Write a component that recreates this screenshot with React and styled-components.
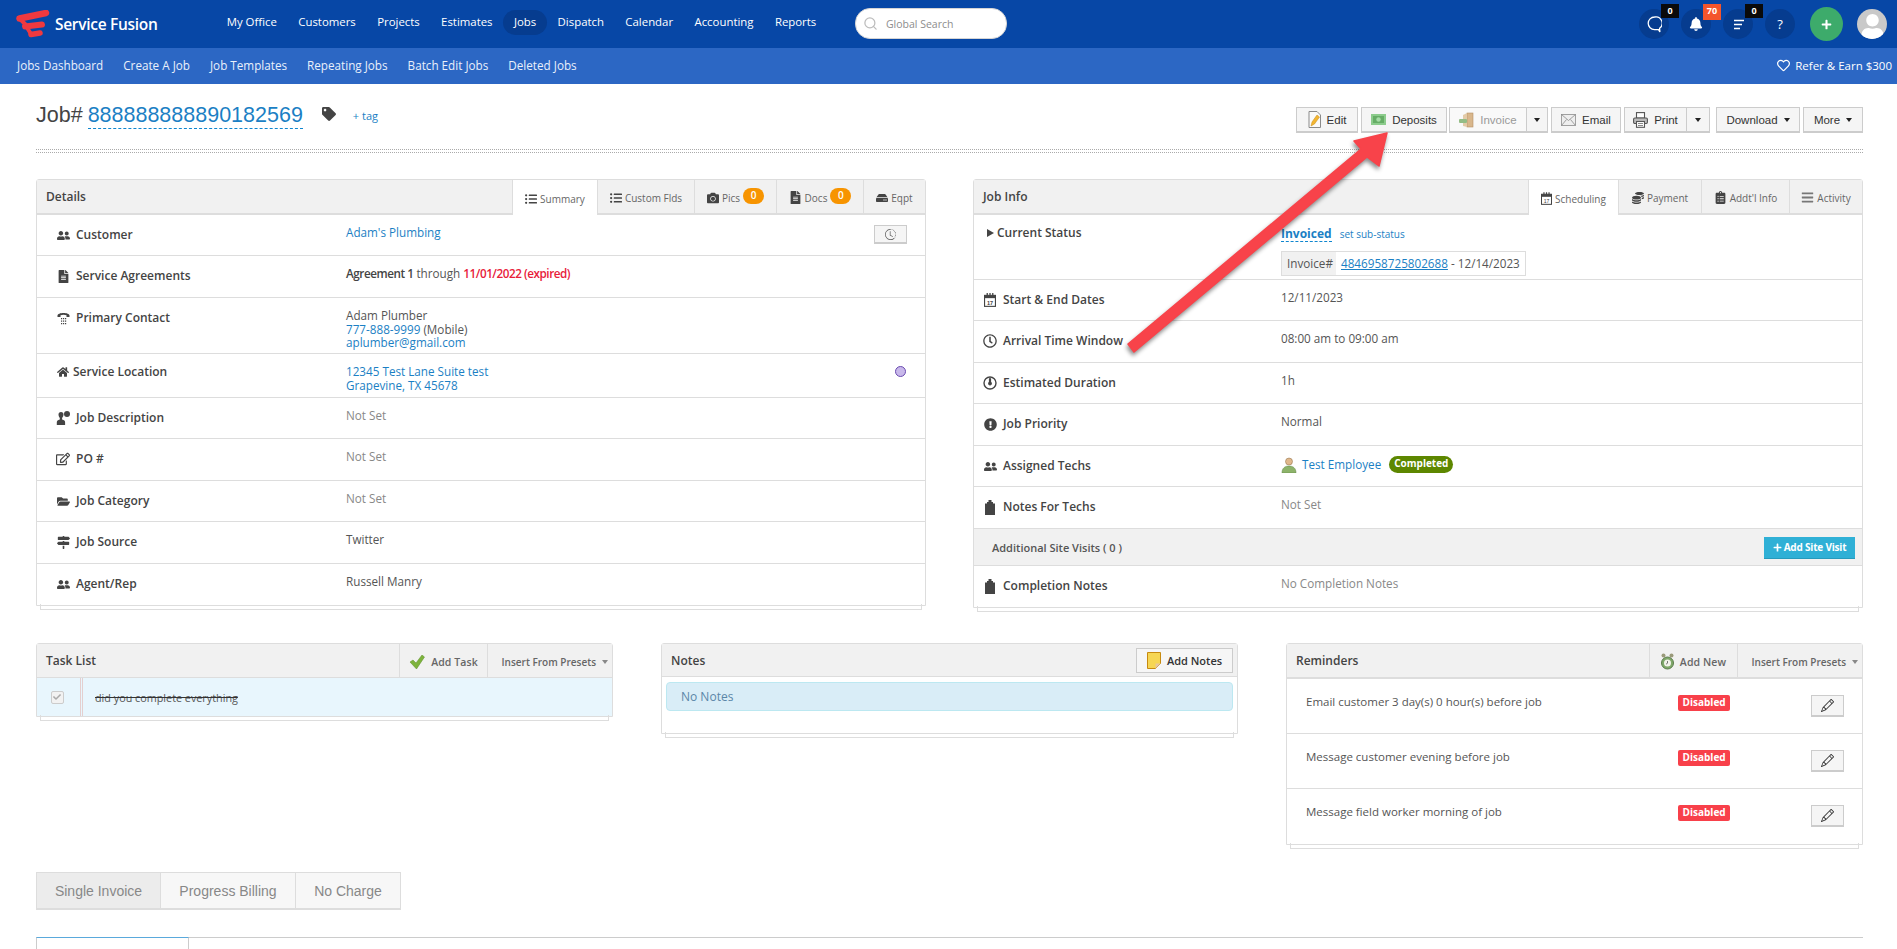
import React from "react";
import styled, { createGlobalStyle } from "styled-components";
import {
  FaListUl, FaCamera, FaFileAlt, FaHome, FaFolderOpen, FaRegClock, FaExclamationCircle,
  FaClipboardList, FaTag, FaUserFriends, FaPlus, FaCoins, FaBell, FaRegHeart, FaUser,
  FaRegEdit, FaCheck, FaHdd, FaBars, FaMapSigns,
} from "react-icons/fa";
import { FiSearch } from "react-icons/fi";
import { BsPencil, BsClockHistory } from "react-icons/bs";

const GlobalStyle = createGlobalStyle`
  html, body { margin: 0; padding: 0; height: 949px; overflow: hidden; background: #fff; }
  body { font-family: "Open Sans", "Liberation Sans", sans-serif; font-size: 12px; color: #555; }
  * { box-sizing: border-box; }
`;

const Page = styled.div`
  position: relative;
  width: 1897px;
  height: 949px;
  overflow: hidden;
`;

const TopBar = styled.div`
  height: 48px;
  background: #0747a6;
  display: flex;
  align-items: center;
  color: #fff;
`;

const Brand = styled.div`
  width: 216px;
  padding-left: 16px;
  display: flex;
  align-items: center;
  gap: 5px;
  font-size: 15.5px;
  font-weight: 600;
  letter-spacing: -0.3px;
`;

const MainNav = styled.div`
  display: flex;
  align-items: center;
  margin-top: -4px;
`;

const MainLink = styled.div`
  height: 25px;
  line-height: 24px;
  padding: 0 10.7px;
  font-size: 11.4px;
  border-radius: 13px;
  color: #fff;
  background: ${(props) => (props.$active ? "#063c8f" : "transparent")};
`;

const SearchBox = styled.div`
  width: 152px;
  height: 31px;
  margin-left: 28px;
  margin-top: -1px;
  background: #fff;
  border-radius: 15px;
  border: 1px solid #d5d5d5;
  display: flex;
  align-items: center;
  gap: 8px;
  padding-left: 7px;
  color: #8d8d8d;
  font-size: 10.5px;
  & svg { color: #bcbcbc; }
`;

const RightIcons = styled.div`
  margin-left: auto;
  margin-right: 10px;
  display: flex;
  align-items: center;
`;

const CircleBtn = styled.div`
  position: relative;
  width: 30px;
  height: 30px;
  margin-right: 12px;
  border-radius: 50%;
  background: #063c8f;
  color: #fff;
  display: flex;
  align-items: center;
  justify-content: center;
  font-size: 13px;
`;

const Count = styled.span`
  position: absolute;
  top: -5px;
  left: 22px;
  width: 18px;
  height: ${(props) => (props.$hot ? "16px" : "14px")};
  background: ${(props) => (props.$hot ? "#f4552c" : "#0a0a0a")};
  color: #fff;
  font-size: 9px;
  font-weight: 700;
  line-height: 14px;
  text-align: center;
`;

const AddCircle = styled.div`
  width: 33px;
  height: 34px;
  margin: 0 14px 0 3px;
  border-radius: 50%;
  background: #3dab6b;
  color: #fff;
  display: flex;
  align-items: center;
  justify-content: center;
`;

const Avatar = styled.div`
  width: 30px;
  height: 30px;
  border-radius: 50%;
  background: #c9c9c9;
  overflow: hidden;
  display: flex;
  align-items: flex-end;
  justify-content: center;
  color: #fff;
`;

const SubBar = styled.div`
  height: 36px;
  background: #2c67c4;
  color: #e9f0fb;
  display: flex;
  align-items: center;
  gap: 20px;
  padding: 0 5px 2px 17px;
  font-size: 11.7px;
`;

const ReferLink = styled.div`
  margin-left: auto;
  display: flex;
  align-items: center;
  gap: 5px;
  color: #fff;
  font-size: 11.5px;
`;

const Content = styled.div`
  padding: 0 34px 0 36px;
`;

const TitleRow = styled.div`
  height: 66px;
  display: flex;
  border-bottom: 1px dotted #aaa;
  position: relative;
  &::after {
    content: "";
    position: absolute;
    left: 0;
    right: 0;
    bottom: -4px;
    border-bottom: 1px dotted #aaa;
  }
`;

const JobTitle = styled.div`
  display: flex;
  align-items: flex-start;
  padding-top: 19px;
  font-family: "Liberation Sans", sans-serif;
  font-size: 21.5px;
  color: #444;
`;

const JobNumber = styled.span`
  color: #1b7fc4;
  margin-left: 5px;
  height: 26px;
  line-height: 25px;
  border-bottom: 1px dashed #0f86cf;
`;

const TagIcon = styled.span`
  margin: 4px 17px 0 19px;
  color: #444;
  font-size: 14px;
  display: flex;
`;

const TagLink = styled.span`
  font-family: "Open Sans", sans-serif;
  font-size: 11px;
  color: #1b7fc4;
  margin-top: 5px;
`;

const Actions = styled.div`
  margin-left: auto;
  margin-top: 23px;
  display: flex;
  align-items: flex-start;
`;

const ActionButton = styled.div`
  width: ${(props) => props.$w}px;
  height: 26px;
  margin-left: ${(props) => props.$ml ?? 3}px;
  border: 1px solid #ccc;
  border-bottom-width: 2px;
  background: ${(props) => (props.$off ? "#f9f9f9" : "#f5f5f5")};
  color: ${(props) => (props.$off ? "#999" : "#333")};
  font-family: "Liberation Sans", sans-serif;
  font-size: 11.5px;
  display: flex;
  align-items: center;
  justify-content: center;
  gap: 6px;
`;

const Caret = styled.i`
  width: 0;
  height: 0;
  border-left: 3px solid transparent;
  border-right: 3px solid transparent;
  border-top: 4px solid ${(props) => props.$color || "#222"};
`;

const TopGrid = styled.div`
  display: grid;
  grid-template-columns: 890px 890px;
  justify-content: space-between;
  align-items: start;
  margin-top: 29px;
`;

const Panel = styled.div`
  position: relative;
  border: 1px solid #ddd;
  border-radius: 3px 3px 0 0;
  background: #fff;
  &::after {
    content: "";
    position: absolute;
    left: 3px;
    right: 3px;
    bottom: -5px;
    height: 5px;
    border: 1px solid #ddd;
    border-top: none;
  }
`;

const PanelHead = styled.div`
  height: ${(props) => props.$h || 35}px;
  background: #f1f1f1;
  border-bottom: ${(props) => props.$line || 2}px solid #ddd;
  display: flex;
  align-items: stretch;
`;

const PanelTitle = styled.div`
  flex: 1;
  padding: 8px 0 0 9px;
  font-weight: 600;
  font-size: 12px;
  color: #444;
`;

const Tab = styled.div`
  width: ${(props) => props.$w}px;
  margin-bottom: ${(props) => (props.$on ? "-2px" : "0")};
  background: ${(props) => (props.$on ? "#fff" : "transparent")};
  border-left: 1px solid #ddd;
  padding-top: 2px;
  display: flex;
  align-items: center;
  justify-content: center;
  gap: 3px;
  font-size: 10px;
  color: #666;
  & svg { color: #444; }
`;

const TabCount = styled.span`
  min-width: 21px;
  height: 16px;
  margin-top: -4px;
  border-radius: 8px;
  background: #f79400;
  color: #fff;
  font-size: 10px;
  font-weight: 600;
  text-align: center;
  line-height: 15px;
`;

const Row = styled.div`
  position: relative;
  height: ${(props) => props.$h}px;
  border-bottom: ${(props) => (props.$last ? "none" : "1px solid #ddd")};
  display: flex;
  align-items: flex-start;
  padding: 0 0 0 ${(props) => props.$pad || 19}px;
`;

const RowLabel = styled.div`
  width: ${(props) => props.$w}px;
  padding-top: ${(props) => props.$top ?? 11}px;
  display: flex;
  align-items: center;
  gap: ${(props) => props.$gap ?? 6}px;
  font-weight: 600;
  font-size: 12px;
  line-height: 18px;
  color: #444;
  & svg { color: #444; flex: none; }
`;

const IconBox = styled.span`
  width: 14px;
  display: flex;
  justify-content: center;
  flex: none;
`;

const PlayMark = styled.i`
  width: 0;
  height: 0;
  margin-left: 1px;
  border-top: 4.5px solid transparent;
  border-bottom: 4.5px solid transparent;
  border-left: 7px solid #444;
`;

const RowValue = styled.div`
  padding-top: 11px;
  font-size: 11.7px;
  line-height: 13.5px;
  color: ${(props) => (props.$muted ? "#888" : "#555")};
`;

const Link = styled.span`
  color: #1b7fc4;
  text-decoration: ${(props) => (props.$under ? "underline" : "none")};
`;

const Expired = styled.span`
  color: #e8203a;
  font-weight: 600;
  letter-spacing: -0.45px;
`;

const Strong = styled.span`
  font-weight: 600;
  color: #444;
  letter-spacing: -0.45px;
`;

const HistoryButton = styled.div`
  position: absolute;
  top: 10px;
  right: 18px;
  width: 33px;
  height: 19px;
  background: #f5f5f5;
  border: 1px solid #ccc;
  border-bottom-width: 2px;
  display: flex;
  align-items: center;
  justify-content: center;
  color: #555;
`;

const PurpleDot = styled.span`
  position: absolute;
  top: 12px;
  right: 19px;
  width: 11px;
  height: 11px;
  border-radius: 50%;
  background: #c8b8ea;
  border: 1px solid #6a4bb0;
`;

const StatusLine = styled.div`
  display: flex;
  align-items: baseline;
  gap: 8px;
`;

const StatusLink = styled.span`
  color: #1b7fc4;
  font-weight: 700;
  font-size: 12px;
  line-height: 15px;
  border-bottom: 1px dashed #0f86cf;
`;

const SubStatus = styled.span`
  color: #1b7fc4;
  font-size: 10px;
`;

const InvoiceBox = styled.div`
  margin-top: 9px;
  width: 245px;
  height: 25px;
  border: 1px solid #ddd;
  display: flex;
  align-items: center;
  white-space: nowrap;
`;

const InvoiceTag = styled.span`
  width: 54px;
  height: 23px;
  line-height: 22px;
  padding-left: 5px;
  background: #f1f1f1;
  margin-right: 5px;
  flex: none;
`;

const TechLine = styled.div`
  display: flex;
  align-items: center;
  gap: 5px;
  margin-top: -1px;
`;

const GreenPill = styled.span`
  background: #5d8700;
  color: #fff;
  font-size: 10px;
  font-weight: 700;
  height: 17px;
  line-height: 15px;
  border-radius: 9px;
  padding: 0 5px;
  margin-left: 3px;
`;

const VisitBar = styled.div`
  height: 37px;
  background: #f1f1f1;
  border-bottom: 1px solid #ddd;
  display: flex;
  align-items: center;
  justify-content: space-between;
  padding: 0 7px 0 18px;
  font-size: 11px;
  font-weight: 600;
  color: #555;
`;

const VisitButton = styled.div`
  width: 91px;
  height: 22px;
  margin-top: 1px;
  background: #2fb0d6;
  border-bottom: 1px solid #269abc;
  color: #fff;
  font-size: 10px;
  font-weight: 700;
  letter-spacing: -0.2px;
  display: flex;
  align-items: center;
  justify-content: center;
  gap: 2px;
`;

const BottomGrid = styled.div`
  display: grid;
  grid-template-columns: 577px 577px 577px;
  justify-content: space-between;
  align-items: start;
  margin-top: 35px;
`;

const HeadAction = styled.div`
  width: ${(props) => props.$w}px;
  border-left: 1px solid #ddd;
  display: flex;
  align-items: center;
  justify-content: center;
  gap: 6px;
  padding-top: 2px;
  font-size: 10.5px;
  font-weight: 600;
  letter-spacing: 0.1px;
  color: #666;
`;

const PresetAction = styled(HeadAction)`
  font-size: 10px;
  justify-content: flex-end;
  padding-right: 4px;
  letter-spacing: 0;
`;

const TaskRow = styled.div`
  height: 38px;
  background: #e8f6fd;
  display: flex;
  align-items: center;
`;

const CheckCell = styled.div`
  width: 46px;
  height: 38px;
  border-right: 3px double #e4cfcf;
  display: flex;
  align-items: center;
  justify-content: center;
  padding-right: 3px;
`;

const CheckBox = styled.span`
  width: 13px;
  height: 13px;
  border: 1px solid #ccc;
  border-radius: 2px;
  background: #f2f2f2;
  color: #aaa;
  font-size: 8px;
  display: flex;
  align-items: center;
  justify-content: center;
`;

const TaskText = styled.span`
  margin-left: 12px;
  font-size: 10.8px;
  color: #555;
  text-decoration: line-through;
  text-decoration-color: #333;
`;

const AddNotes = styled.div`
  width: 97px;
  height: 25px;
  margin: 4px 4px 0 0;
  background: #f6f6f6;
  border: 1px solid #ccc;
  display: flex;
  align-items: center;
  justify-content: center;
  gap: 6px;
  font-size: 11px;
  font-weight: 600;
  color: #333;
`;

const NotesBody = styled.div`
  height: 56px;
  padding: 5px 4px 0;
`;

const NotesAlert = styled.div`
  height: 29px;
  padding-left: 14px;
  background: #d9edf7;
  border: 1px solid #bce8f1;
  border-radius: 4px;
  color: #5b87a8;
  font-size: 12px;
  line-height: 27px;
`;

const ReminderRow = styled.div`
  height: 55px;
  padding: 16px 18px 0 19px;
  border-bottom: ${(props) => (props.$last ? "none" : "1px solid #ddd")};
  display: flex;
  align-items: flex-start;
  font-size: 11.5px;
  line-height: 18px;
  color: #555;
`;

const ReminderText = styled.div`
  width: 373px;
  margin-top: -2px;
`;

const DisabledTag = styled.span`
  width: 52px;
  height: 16px;
  background: #f8404a;
  border-radius: 2px;
  color: #fff;
  font-size: 10px;
  font-weight: 700;
  line-height: 15px;
  text-align: center;
`;

const EditSquare = styled.div`
  width: 33px;
  height: 22px;
  margin-left: 81px;
  background: #f5f5f5;
  border: 1px solid #ccc;
  border-bottom-width: 2px;
  color: #333;
  display: flex;
  align-items: center;
  justify-content: center;
`;

const BillingTabs = styled.div`
  display: flex;
  margin-top: 27px;
`;

const BillingTab = styled.div`
  height: 38px;
  width: ${(props) => props.$w}px;
  margin-left: -1px;
  background: ${(props) => (props.$on ? "#ececec" : "#f7f7f7")};
  border: 1px solid #ddd;
  border-bottom-width: 2px;
  font-family: "Liberation Sans", sans-serif;
  font-size: 14px;
  color: #888;
  display: flex;
  align-items: center;
  justify-content: center;
  &:first-child { margin-left: 0; }
`;

const LowerTabs = styled.div`
  margin-top: 27px;
  height: 20px;
  border-top: 1px solid #ccc;
  position: relative;
`;

const LowerActive = styled.div`
  position: absolute;
  top: -1px;
  left: 0;
  width: 153px;
  height: 20px;
  border-top: 1px solid #5aa9dc;
  border-left: 1px solid #ccc;
  border-right: 1px solid #ccc;
  background: #fff;
`;

const ArrowOverlay = styled.svg`
  position: absolute;
  left: 0;
  top: 0;
  width: 1897px;
  height: 949px;
  pointer-events: none;
  filter: drop-shadow(-1px 3px 2px rgba(0, 0, 0, 0.45));
`;

function Logo() {
  return (
    <svg width="34" height="28" viewBox="0 0 34 28" fill="none" stroke="#f0393f" strokeLinecap="round">
      <path d="M3.500 8.500L30 3" strokeWidth="6.500" />
      <path d="M4 9L11 16M10 16L15 24" strokeWidth="4" />
      <path d="M9 16.500L26 14.500" strokeWidth="6" />
      <path d="M15 24.500L24 23" strokeWidth="5.500" />
    </svg>
  );
}

function ChatIcon() {
  return (
    <svg width="15" height="17" viewBox="0 0 15 17" fill="none" stroke="#fff" strokeWidth="1.300">
      <path d="M7.500 1a6.300 6.300 0 1 0 0 12.600c1.500 0 3 .1 4 .1l1.400 2.300-.3-3.800A6.300 6.300 0 0 0 7.500 1z" />
    </svg>
  );
}

function LinesIcon() {
  return (
    <svg width="13" height="13" viewBox="0 0 13 13" stroke="#fff" strokeWidth="1.700">
      <path d="M2 2.500h10M2 6.500h8M2 10.500h6" />
    </svg>
  );
}

function EditIcon() {
  return (
    <svg width="13" height="17" viewBox="0 0 13 17">
      <path d="M1 .5h8l3.500 3.500v12.500H1z" fill="#fafafa" stroke="#8a8a8a" />
      <path d="M3 15l1-4 5-7 2.500 2-5 7z" fill="#f2b632" stroke="#c88a12" strokeWidth=".5" />
    </svg>
  );
}

function MoneyIcon() {
  return (
    <svg width="15" height="11" viewBox="0 0 15 11">
      <rect width="15" height="11" fill="#8ccc8c" />
      <rect x="2" y="2" width="11" height="7" fill="#66ad66" />
      <circle cx="7.500" cy="5.500" r="2.200" fill="#a6dca6" />
    </svg>
  );
}

function DoorIcon() {
  return (
    <svg width="15" height="16" viewBox="0 0 15 16">
      <rect x="8" y="1" width="6" height="14" fill="#d9b78c" stroke="#b59266" strokeWidth=".6" />
      <path d="M8 1L4 3v11l4 1z" fill="#e3cba8" />
      <rect x="0" y="7" width="8" height="4" rx="1" fill="#94bd86" />
    </svg>
  );
}

function MailIcon() {
  return (
    <svg width="15" height="12" viewBox="0 0 15 12" fill="#eee" stroke="#8c8c8c" strokeWidth=".8">
      <rect x=".5" y=".5" width="14" height="11" />
      <path d="M.5.5l7 6 7-6M.5 11.500l5-6M14.500 11.500l-5-6" fill="none" />
    </svg>
  );
}

function PrintIcon() {
  return (
    <svg width="15" height="16" viewBox="0 0 15 16" fill="none" stroke="#555" strokeWidth="1.100">
      <rect x="3.500" y=".6" width="8" height="5.500" fill="#fff" />
      <rect x=".6" y="6" width="13.800" height="5.500" rx="1.200" fill="#bbb" />
      <rect x="3.500" y="9.500" width="8" height="5.800" fill="#fff" />
      <path d="M5 11.500h5M5 13.500h5" strokeWidth=".7" />
    </svg>
  );
}

function LeafCheck() {
  return (
    <svg width="16" height="14" viewBox="0 0 16 14">
      <path d="M1 7l3-2 3 3 6-8 2.500 2L7.500 14z" fill="#7db33c" stroke="#5b8f26" strokeWidth=".5" />
    </svg>
  );
}

function NoteIcon() {
  return (
    <svg width="14" height="17" viewBox="0 0 14 17">
      <path d="M.5.500h13v11l-5 5H.5z" fill="#f6d654" stroke="#c78a10" />
      <path d="M8.500 16.500v-5h5z" fill="#e6c6a0" />
    </svg>
  );
}

function AlarmIcon() {
  return (
    <svg width="13" height="17" viewBox="0 0 13 17">
      <circle cx="2.500" cy="2.500" r="2" fill="#9a9a7a" />
      <circle cx="10.500" cy="2.500" r="2" fill="#9a9a7a" />
      <circle cx="6.500" cy="10" r="6" fill="#7fa86a" stroke="#5b7b4b" />
      <circle cx="6.500" cy="10" r="3.500" fill="#f2f2ea" />
      <path d="M6.500 8v2.200l-1.500 1" stroke="#444" strokeWidth=".7" fill="none" />
    </svg>
  );
}

function TechIcon() {
  return (
    <svg width="16" height="16" viewBox="0 0 16 16">
      <circle cx="8" cy="4.500" r="3.500" fill="#e0b88c" stroke="#8b6a40" strokeWidth=".5" />
      <path d="M1 16c0-5 3-7 7-7s7 2 7 7z" fill="#8db36a" stroke="#5f8543" strokeWidth=".5" />
    </svg>
  );
}

function CalendarIcon({ size = 15 }) {
  return (
    <svg width={size} height={size + 2} viewBox="0 0 13 15">
      <rect x=".6" y="2.500" width="11.800" height="11.900" fill="#fff" stroke="#444" strokeWidth="1.200" />
      <rect x=".6" y="2.500" width="11.800" height="3" fill="#444" />
      <path d="M3.500 0v3.500M6.500 0v3.500M9.500 0v3.500" stroke="#444" strokeWidth="1.400" />
      <text x="6.500" y="12.500" fontSize="6" textAnchor="middle" fill="#444" fontFamily="Liberation Sans, sans-serif">17</text>
    </svg>
  );
}

function ContactIcon() {
  return (
    <svg width="13" height="15" viewBox="0 0 13 15" fill="#444">
      <path d="M.5 4.500C.5 1 12.500 1 12.500 4.500V6H9.500V4.200C8 3.500 5 3.500 3.500 4.200V6H.5z" />
      <path d="M4 7h1.200v1.200H4zM6 7h1.200v1.200H6zM8 7h1.200v1.200H8zM4 9.500h1.200v1.200H4zM6 9.500h1.200v1.200H6zM8 9.500h1.200v1.200H8zM4 12h1.200v1.200H4zM6 12h1.200v1.200H6zM8 12h1.200v1.200H8z" />
    </svg>
  );
}

function RepIcon() {
  return (
    <svg width="14" height="14" viewBox="0 0 14 14" fill="#444">
      <circle cx="11" cy="3" r="3" />
      <path d="M5 1a2.500 2.500 0 0 1 2.500 2.500c0 1.400-.8 2.500-1.400 3.400V8.500c2 .5 3 1 3 3V14H.8v-2.500c0-2 1-2.500 3-3V6.900C3.200 6 2.500 4.900 2.500 3.500A2.500 2.500 0 0 1 5 1z" />
    </svg>
  );
}

function DurationIcon() {
  return (
    <svg width="14" height="14" viewBox="0 0 14 14" fill="none" stroke="#444">
      <circle cx="7" cy="7" r="6" strokeWidth="1.400" />
      <path d="M7 3v4" strokeWidth="2.200" strokeLinecap="round" />
      <circle cx="7" cy="7.500" r="1.500" fill="#444" />
    </svg>
  );
}

function ClipIcon() {
  return (
    <svg width="10" height="15" viewBox="0 0 10 15" fill="#444">
      <path d="M3.500 0h3v2h1.500v1.500H10V15H0V3.500h2V2h1.500z" />
    </svg>
  );
}

function LabelRow({ h, icon, label, top, pad, w, gap, last, children }) {
  return (
    <Row $h={h} $last={last} $pad={pad}>
      <RowLabel $w={w} $top={top} $gap={gap}>
        <IconBox>{icon}</IconBox>
        {label}
      </RowLabel>
      {children}
    </Row>
  );
}

const leftRows = [
  { h: 41, icon: <FaUserFriends size={13} />, label: "Customer", value: <Link>Adam's Plumbing</Link>, extra: <HistoryButton><BsClockHistory size={11} /></HistoryButton> },
  { h: 42, icon: <FaFileAlt size={13} />, label: "Service Agreements", value: <><Strong>Agreement 1</Strong> through <Expired>11/01/2022 (expired)</Expired></> },
  { h: 56, icon: <ContactIcon />, label: "Primary Contact", value: <>Adam Plumber<br /><Link>777-888-9999</Link> (Mobile)<br /><Link>aplumber@gmail.com</Link></> },
  { h: 44, icon: <FaHome size={12} />, label: "Service Location", top: 9, gap: 3, value: <><Link>12345 Test Lane Suite test</Link><br /><Link>Grapevine, TX 45678</Link></>, extra: <PurpleDot /> },
  { h: 41, icon: <RepIcon />, label: "Job Description", value: "Not Set", muted: true },
  { h: 42, icon: <FaRegEdit size={14} />, label: "PO #", value: "Not Set", muted: true },
  { h: 41, icon: <FaFolderOpen size={13} />, label: "Job Category", value: "Not Set", muted: true },
  { h: 42, icon: <FaMapSigns size={13} />, label: "Job Source", value: "Twitter" },
  { h: 41, icon: <FaUserFriends size={13} />, label: "Agent/Rep", value: "Russell Manry", last: true },
];

const rightRows = [
  { h: 41, icon: <CalendarIcon size={12} />, label: "Start & End Dates", value: "12/11/2023" },
  { h: 42, icon: <FaRegClock size={14} />, label: "Arrival Time Window", value: "08:00 am to 09:00 am" },
  { h: 41, icon: <DurationIcon />, label: "Estimated Duration", value: "1h" },
  { h: 42, icon: <FaExclamationCircle size={13} />, label: "Job Priority", value: "Normal" },
  {
    h: 41,
    icon: <FaUserFriends size={13} />,
    label: "Assigned Techs",
    value: (
      <TechLine>
        <TechIcon />
        <Link>Test Employee</Link>
        <GreenPill>Completed</GreenPill>
      </TechLine>
    ),
  },
  { h: 42, icon: <ClipIcon />, label: "Notes For Techs", value: "Not Set", muted: true },
];

const reminders = [
  "Email customer 3 day(s) 0 hour(s) before job",
  "Message customer evening before job",
  "Message field worker morning of job",
];

export default function App() {
  return (
    <Page>
      <GlobalStyle />
      <TopBar>
        <Brand>
          <Logo />
          Service Fusion
        </Brand>
        <MainNav>
          <MainLink>My Office</MainLink>
          <MainLink>Customers</MainLink>
          <MainLink>Projects</MainLink>
          <MainLink>Estimates</MainLink>
          <MainLink $active>Jobs</MainLink>
          <MainLink>Dispatch</MainLink>
          <MainLink>Calendar</MainLink>
          <MainLink>Accounting</MainLink>
          <MainLink>Reports</MainLink>
        </MainNav>
        <SearchBox>
          <FiSearch size={15} />
          Global Search
        </SearchBox>
        <RightIcons>
          <CircleBtn><ChatIcon /><Count>0</Count></CircleBtn>
          <CircleBtn><FaBell size={14} /><Count $hot>70</Count></CircleBtn>
          <CircleBtn><LinesIcon /><Count>0</Count></CircleBtn>
          <CircleBtn>?</CircleBtn>
          <AddCircle><FaPlus size={11} /></AddCircle>
          <Avatar><FaUser size={25} /></Avatar>
        </RightIcons>
      </TopBar>
      <SubBar>
        <span>Jobs Dashboard</span>
        <span>Create A Job</span>
        <span>Job Templates</span>
        <span>Repeating Jobs</span>
        <span>Batch Edit Jobs</span>
        <span>Deleted Jobs</span>
        <ReferLink><FaRegHeart size={13} />Refer &amp; Earn $300</ReferLink>
      </SubBar>
      <Content>
        <TitleRow>
          <JobTitle>
            Job#
            <JobNumber>888888888890182569</JobNumber>
            <TagIcon><FaTag /></TagIcon>
            <TagLink>+ tag</TagLink>
          </JobTitle>
          <Actions>
            <ActionButton $w={62} $ml={0}><EditIcon />Edit</ActionButton>
            <ActionButton $w={86}><MoneyIcon />Deposits</ActionButton>
            <ActionButton $w={78} $ml={2} $off><DoorIcon />Invoice</ActionButton>
            <ActionButton $w={22} $ml={-1}><Caret /></ActionButton>
            <ActionButton $w={70}><MailIcon />Email</ActionButton>
            <ActionButton $w={63}><PrintIcon />Print</ActionButton>
            <ActionButton $w={24} $ml={-1}><Caret /></ActionButton>
            <ActionButton $w={84} $ml={6}>Download <Caret /></ActionButton>
            <ActionButton $w={60}>More <Caret /></ActionButton>
          </Actions>
        </TitleRow>
        <TopGrid>
          <Panel>
            <PanelHead>
              <PanelTitle>Details</PanelTitle>
              <Tab $w={85} $on><FaListUl size={12} />Summary</Tab>
              <Tab $w={97}><FaListUl size={12} />Custom Flds</Tab>
              <Tab $w={82}><FaCamera size={12} />Pics <TabCount>0</TabCount></Tab>
              <Tab $w={87}><FaFileAlt size={13} />Docs <TabCount>0</TabCount></Tab>
              <Tab $w={62}><FaHdd size={12} />Eqpt</Tab>
            </PanelHead>
            {leftRows.map((row) => (
              <LabelRow key={row.label} h={row.h} icon={row.icon} label={row.label} top={row.top} gap={row.gap} last={row.last} w={290}>
                <RowValue $muted={row.muted}>{row.value}</RowValue>
                {row.extra}
              </LabelRow>
            ))}
          </Panel>
          <Panel>
            <PanelHead>
              <PanelTitle>Job Info</PanelTitle>
              <Tab $w={90} $on><CalendarIcon size={11} />Scheduling</Tab>
              <Tab $w={83}><FaCoins size={12} />Payment</Tab>
              <Tab $w={88}><FaClipboardList size={13} />Addt'l Info</Tab>
              <Tab $w={73}><FaBars size={13} color="#777" />Activity</Tab>
            </PanelHead>
            <Row $h={65} $pad={9}>
              <RowLabel $w={298} $top={9} $gap={0}>
                <IconBox><PlayMark /></IconBox>
                Current Status
              </RowLabel>
              <RowValue>
                <StatusLine>
                  <StatusLink>Invoiced</StatusLink>
                  <SubStatus>set sub-status</SubStatus>
                </StatusLine>
                <InvoiceBox>
                  <InvoiceTag>Invoice#</InvoiceTag>
                  <Link $under>4846958725802688</Link>&nbsp;- 12/14/2023
                </InvoiceBox>
              </RowValue>
            </Row>
            {rightRows.map((row) => (
              <LabelRow key={row.label} h={row.h} icon={row.icon} label={row.label} pad={9} w={298}>
                <RowValue $muted={row.muted}>{row.value}</RowValue>
              </LabelRow>
            ))}
            <VisitBar>
              Additional Site Visits ( 0 )
              <VisitButton><FaPlus size={9} />Add Site Visit</VisitButton>
            </VisitBar>
            <LabelRow h={41} icon={<ClipIcon />} label="Completion Notes" pad={9} w={298} last>
              <RowValue $muted>No Completion Notes</RowValue>
            </LabelRow>
          </Panel>
        </TopGrid>
        <BottomGrid>
          <Panel>
            <PanelHead $h={34} $line={1}>
              <PanelTitle>Task List</PanelTitle>
              <HeadAction $w={88}><LeafCheck />Add Task</HeadAction>
              <PresetAction $w={125}>Insert From Presets <Caret $color="#888" /></PresetAction>
            </PanelHead>
            <TaskRow>
              <CheckCell><CheckBox><FaCheck /></CheckBox></CheckCell>
              <TaskText>did you complete everything</TaskText>
            </TaskRow>
          </Panel>
          <Panel>
            <PanelHead $h={33} $line={1}>
              <PanelTitle>Notes</PanelTitle>
              <AddNotes><NoteIcon />Add Notes</AddNotes>
            </PanelHead>
            <NotesBody>
              <NotesAlert>No Notes</NotesAlert>
            </NotesBody>
          </Panel>
          <Panel>
            <PanelHead>
              <PanelTitle>Reminders</PanelTitle>
              <HeadAction $w={88}><AlarmIcon />Add New</HeadAction>
              <PresetAction $w={125}>Insert From Presets <Caret $color="#888" /></PresetAction>
            </PanelHead>
            {reminders.map((text, index) => (
              <ReminderRow key={text} $last={index === reminders.length - 1}>
                <ReminderText>{text}</ReminderText>
                <DisabledTag>Disabled</DisabledTag>
                <EditSquare><BsPencil size={13} /></EditSquare>
              </ReminderRow>
            ))}
          </Panel>
        </BottomGrid>
        <BillingTabs>
          <BillingTab $w={125} $on>Single Invoice</BillingTab>
          <BillingTab $w={136}>Progress Billing</BillingTab>
          <BillingTab $w={106}>No Charge</BillingTab>
        </BillingTabs>
        <LowerTabs><LowerActive /></LowerTabs>
      </Content>
      <ArrowOverlay viewBox="0 0 1897 949">
        <polygon
          points="1387,133 1354,141 1361,149 1128,344 1134,352 1367,157 1379,166"
          fill="#f8434a"
          stroke="#f8434a"
          strokeWidth="1.500"
          strokeLinejoin="round"
        />
      </ArrowOverlay>
    </Page>
  );
}
